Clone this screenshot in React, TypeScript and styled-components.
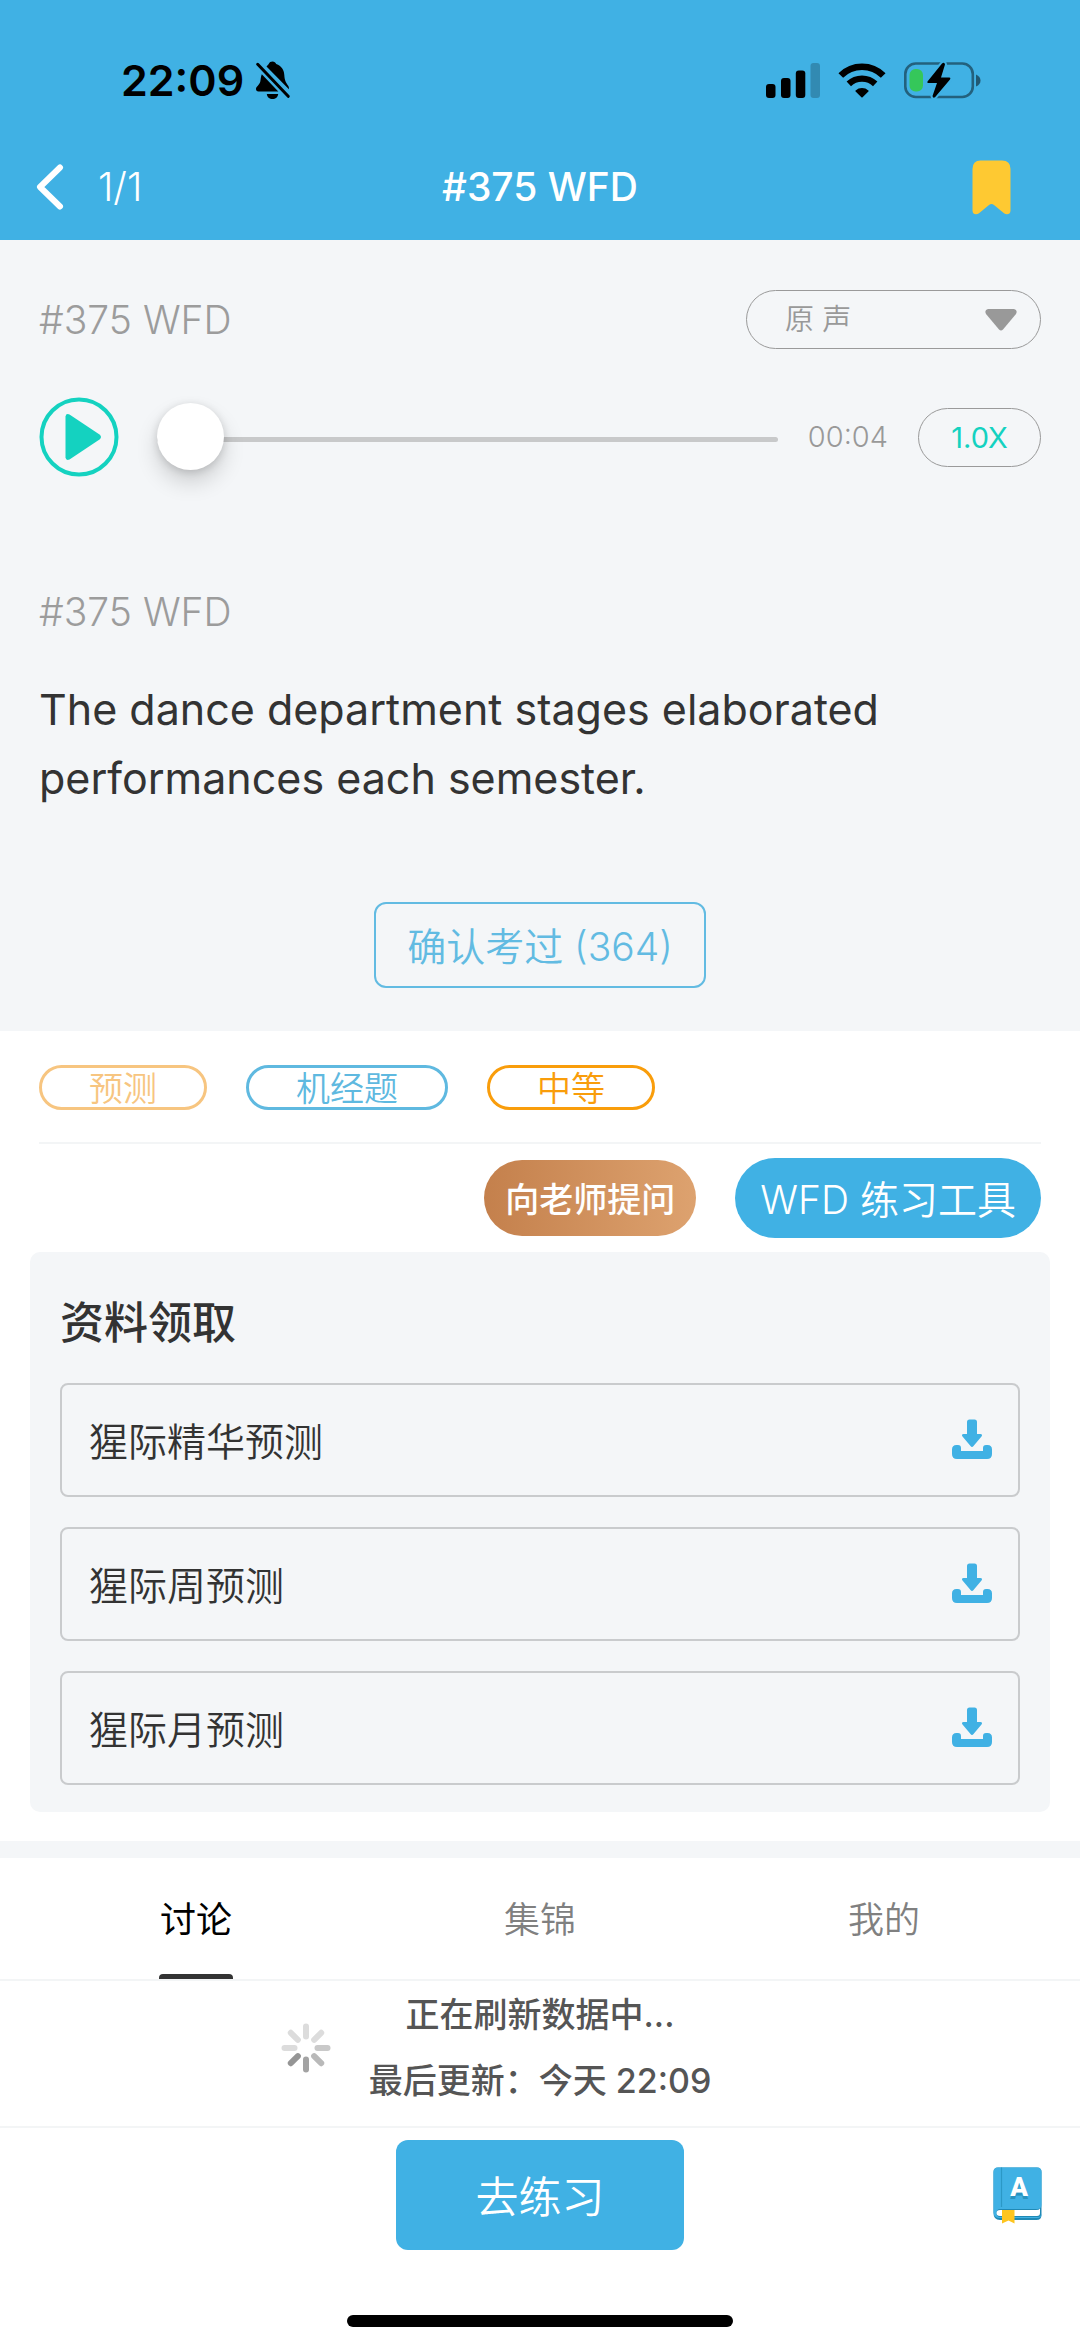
import React, { useState } from "react";
import styled, { createGlobalStyle } from "styled-components";

const BLUE = "#40b1e4";
const SOFT_BLUE = "#62bbe2";
const TEAL = "#14d2c0";
const PANEL = "#f4f6f8";
const INK = "#333333";

const GlobalStyle = createGlobalStyle`
  * { box-sizing: border-box; }
  body {
    margin: 0;
    background: #ffffff;
    color: ${INK};
    font-family: Inter, "Noto Sans CJK SC", sans-serif;
  }
  button, select { font-family: inherit; margin: 0; padding: 0; border: 0; background: none; color: inherit; }
  svg { display: block; }
  h1, h2, p, ul { margin: 0; padding: 0; }
`;

const Page = styled.div`
  display: flex;
  flex-direction: column;
  min-height: 100vh;
`;

/* ---------- header ---------- */

const Header = styled.header`
  background: ${BLUE};
`;

const StatusBar = styled.div`
  display: flex;
  align-items: center;
  justify-content: space-between;
  height: 134px;
  padding: 26px 99px 0 121px;
`;

const Cluster = styled.div<{ $gap: number }>`
  display: flex;
  align-items: center;
  gap: ${(p) => p.$gap}px;
`;

const Clock = styled.span`
  color: #000;
  font-size: 43px;
  font-weight: 600;
  line-height: 48px;
`;

const NavBar = styled.nav`
  display: grid;
  grid-template-columns: 1fr auto 1fr;
  align-items: center;
  height: 106px;
  padding: 0 69px 0 36px;
  color: #fff;
  font-size: 39px;
  line-height: 48px;
`;

const IconButton = styled.button`
  display: block;
  cursor: pointer;
`;

const Counter = styled.span`
  font-weight: 350;
`;

const NavTitle = styled.h1`
  padding-left: 33px;
  font-size: 39px;
  font-weight: 500;
`;

const NavEnd = styled.div`
  justify-self: end;
`;

/* ---------- question ---------- */

const Question = styled.section`
  display: flex;
  flex-direction: column;
  padding: 50px 39px 43px;
  background: ${PANEL};
`;

const Row = styled.div`
  display: flex;
  align-items: center;
  justify-content: space-between;
`;

const Label = styled.h2`
  color: #9c9c9c;
  font-size: 39px;
  font-weight: 300;
  line-height: 48px;
`;

const SelectBox = styled.label`
  display: grid;
  grid-template-columns: 295px;
  align-items: center;
  height: 59px;
  > * { grid-area: 1 / 1; }
  > svg { justify-self: end; margin-right: 24px; pointer-events: none; }
`;

const VoiceSelect = styled.select`
  appearance: none;
  width: 100%;
  height: 100%;
  padding: 0 38px;
  border: 1px solid #9a9a9a;
  border-radius: 30px;
  color: #999;
  font-size: 29px;
  font-weight: 350;
`;

const Player = styled.div`
  display: flex;
  align-items: center;
  height: 80px;
  margin-top: 48px;
`;

const Seek = styled.input`
  appearance: none;
  flex: 1;
  min-width: 0;
  height: 68px;
  margin: 0 30px 0 38px;
  background: transparent;
  &::-webkit-slider-runnable-track {
    height: 5px;
    border-radius: 3px;
    background: #c8c9ca;
    margin-top: 4px;
  }
  &::-webkit-slider-thumb {
    appearance: none;
    width: 67px;
    height: 67px;
    margin-top: -34px;
    border-radius: 50%;
    background: #fff;
    box-shadow: 0 12px 22px rgba(0, 0, 0, 0.16), 0 2px 8px rgba(0, 0, 0, 0.14);
  }
`;

const Duration = styled.span`
  color: #999;
  font-size: 29px;
  font-weight: 300;
  line-height: 40px;
`;

const Speed = styled.button`
  width: 123px;
  height: 59px;
  margin-left: 30px;
  border: 1px solid #9a9a9a;
  border-radius: 30px;
  color: ${TEAL};
  font-size: 29px;
`;

const Transcript = styled.div`
  margin-top: 111px;
`;

const Sentence = styled.p`
  margin-top: 39px;
  font-size: 43px;
  font-weight: 400;
  line-height: 69px;
`;

const SeenButton = styled.button`
  align-self: center;
  height: 86px;
  margin-top: 89px;
  padding: 0 31px 2px;
  border: 2px solid ${SOFT_BLUE};
  border-radius: 12px;
  color: ${SOFT_BLUE};
  font-size: 39px;
  font-weight: 350;
`;

/* ---------- tags and actions ---------- */

const Tags = styled.ul`
  display: flex;
  gap: 39px;
  margin: 0 39px;
  padding: 34px 0 32px;
  border-bottom: 2px solid #f3f5f6;
  list-style: none;
`;

const Tag = styled.li<{ $color: string }>`
  height: 45px;
  padding: 0 47px;
  border: 3px solid ${(p) => p.$color};
  border-radius: 23px;
  color: ${(p) => p.$color};
  font-size: 34px;
  font-weight: 350;
  line-height: 41px;
`;

const Actions = styled.div`
  display: flex;
  align-items: center;
  justify-content: flex-end;
  gap: 39px;
  padding: 14px 39px;
`;

const AskButton = styled.button`
  height: 76px;
  padding: 0 21px 2px;
  border-radius: 38px;
  background: linear-gradient(90deg, #c4804c, #dda26f);
  color: #fff;
  font-size: 34px;
  font-weight: 500;
`;

const ToolButton = styled.button`
  height: 80px;
  padding: 0 25px 2px;
  border-radius: 40px;
  background: ${BLUE};
  color: #fff;
  font-size: 39px;
  font-weight: 350;
`;

/* ---------- materials ---------- */

const Materials = styled.section`
  margin: 0 30px 29px;
  padding: 41px 30px 27px;
  border-radius: 10px;
  background: ${PANEL};
`;

const MaterialsTitle = styled.h2`
  font-size: 44px;
  font-weight: 500;
  line-height: 60px;
`;

const MaterialList = styled.div`
  display: flex;
  flex-direction: column;
  gap: 30px;
  margin-top: 30px;
`;

const MaterialItem = styled.button`
  display: flex;
  align-items: center;
  justify-content: space-between;
  height: 114px;
  padding: 0 26px 2px 27px;
  border: 2px solid #c9cbcd;
  border-radius: 8px;
  font-size: 39px;
  font-weight: 350;
`;

/* ---------- discussion ---------- */

const Tabs = styled.div`
  display: grid;
  grid-template-columns: repeat(3, 1fr);
  padding: 0 24px;
  border-top: 17px solid ${PANEL};
  border-bottom: 2px solid #f3f5f6;
`;

const Tab = styled.button<{ $active: boolean }>`
  justify-self: center;
  height: 121px;
  color: ${(p) => (p.$active ? "#000" : "#808080")};
  font-size: 36px;
  font-weight: ${(p) => (p.$active ? 400 : 350)};
  &::after {
    content: "";
    display: block;
    width: 74px;
    height: 5px;
    border-radius: 4px 4px 0 0;
    background: ${(p) => (p.$active ? INK : "transparent")};
  }
`;

const TabText = styled.span`
  display: block;
  height: 116px;
  line-height: 125px;
`;

const Refresh = styled.div`
  display: grid;
  grid-template-columns: 1fr auto 1fr;
  column-gap: 38px;
  padding: 1px 0 12px;
  > svg { justify-self: end; align-self: center; }
`;

const RefreshText = styled.p`
  color: #555;
  font-size: 34px;
  font-weight: 500;
  line-height: 66px;
  text-align: center;
`;

/* ---------- bottom bar ---------- */

const BottomBar = styled.footer`
  display: grid;
  grid-template-columns: 1fr auto 1fr;
  align-items: center;
  padding: 12px 38px 0;
  border-top: 2px solid #f3f5f6;
`;

const PracticeButton = styled.button`
  grid-column: 2;
  width: 288px;
  height: 110px;
  padding-bottom: 2px;
  border-radius: 12px;
  background: ${BLUE};
  color: #fff;
  font-size: 43px;
  font-weight: 350;
`;

const DictionaryButton = styled(IconButton)`
  justify-self: end;
`;

const HomeIndicator = styled.div`
  align-self: center;
  width: 386px;
  height: 12px;
  margin: auto 0 20px;
  border-radius: 6px;
  background: #000;
`;

/* ---------- drawings ---------- */

const MutedBell = () => (
  <svg width="34" height="38" viewBox="0 0 34 38" fill="#000">
    <path d="M10.500 5.500C11.500 4.300 12.300 3.900 12.700 3.100C13.300 1.200 14.800 0.500 16.500 0.500C18.300 0.500 19.600 1.400 20.200 3.100C25.500 5 28 9 28.300 14C28.600 19 29.500 21 32 24.500C33 26 33 27 32.900 28.300Z" />
    <path d="M5.800 13.200L22.300 30.500H2.500C0.800 30.500 0 29.500 0 28C0 25.500 3.500 24 4.300 20.500C4.800 18 4.800 15.500 5.800 13.200Z" />
    <path d="M10.800 33H22.200C22 36 19.500 38 16.500 38C13.500 38 11 36 10.800 33Z" />
    <path d="M1.700 3.300L32.200 35.300" stroke="#000" strokeWidth="3" strokeLinecap="round" />
  </svg>
);

const Signal = () => (
  <svg width="54" height="35" viewBox="0 0 54 35">
    <rect x="0" y="21" width="9.500" height="14" rx="3" />
    <rect x="15" y="15" width="9.500" height="20" rx="3" />
    <rect x="29.800" y="7.500" width="9.500" height="27.500" rx="3" />
    <rect x="44.500" y="0" width="9.500" height="35" rx="3" opacity="0.22" />
  </svg>
);

const Wifi = () => (
  <svg width="48" height="35" viewBox="0 0 48 35">
    <path d="M2.800 12.500A30 30 0 0 1 45.200 12.500" fill="none" stroke="#000" strokeWidth="6.600" />
    <path d="M10.800 20.800A19.300 19.300 0 0 1 37.200 20.800" fill="none" stroke="#000" strokeWidth="6.400" />
    <path d="M17.600 27.400A9.600 9.600 0 0 1 30.400 27.400Q31 28 30.400 28.600L24.600 34.300Q24 34.900 23.400 34.300L17.600 28.600Q17 28 17.600 27.400Z" />
  </svg>
);

const Battery = () => (
  <svg width="77" height="37" viewBox="0 0 77 37">
    <rect x="1.300" y="1.500" width="67.500" height="33.500" rx="10.500" fill="none" stroke="#000" strokeOpacity="0.45" strokeWidth="2.600" />
    <path d="M72 12.500Q76.500 14.500 76.500 18.500T72 24.500Z" fillOpacity="0.5" />
    <rect x="5.500" y="7" width="13.500" height="22.500" rx="6" fill="#35c75a" />
    <path
      d="M38 1.500L23.500 19.500Q23 21 24.500 21H33L28.500 34Q29 36.500 31 35.200L46 17.500Q47 15.500 45.200 15.500H37L41 2.500Q40.500 -0.500 38 1.500Z"
      stroke={BLUE}
      strokeWidth="4"
      paintOrder="stroke"
    />
  </svg>
);

const BackArrow = () => (
  <svg width="28" height="46" viewBox="0 0 28 46" fill="none" stroke="#fff" strokeWidth="6" strokeLinecap="round" strokeLinejoin="round">
    <path d="M24 3.500L4 23L24 42.500" />
  </svg>
);

const Bookmark = () => (
  <svg width="39" height="55" viewBox="0 0 39 55">
    <path
      d="M8.500 0.500H30Q38.500 0.500 38.500 9V50.500C38.500 54.500 34.500 55.300 32 53.200L22 45Q19.500 43 17 45L7 53.200C4.500 55.300 0.500 54.500 0.500 50.500V9Q0.500 0.500 8.500 0.500Z"
      fill="#fec932"
    />
  </svg>
);

const Caret = () => (
  <svg width="32" height="22" viewBox="0 0 32 22">
    <path d="M3 0H29Q33 1 31 5L18 20.500Q16 22.500 14 20.500L1 5Q-1 1 3 0Z" fill="#999" />
  </svg>
);

const Play = () => (
  <svg width="80" height="80" viewBox="0 0 80 80">
    <circle cx="40" cy="40" r="37.500" fill="none" stroke={TEAL} strokeWidth="4" />
    <path d="M26.500 19.500Q27 16 30.500 17.500L60.500 37.500Q63.500 40 60.500 42.500L30.500 62.500Q27 64 26.500 60.500Z" fill={TEAL} />
  </svg>
);

const Download = () => (
  <svg width="40" height="40" viewBox="0 0 40 40" fill={BLUE}>
    <path d="M17.500 0.500H22.500Q25 0.500 25 3V15H28.500Q31 15.500 29.500 17.500L21.500 27Q20 28.800 18.500 27L10.500 17.500Q9 15.500 11.500 15H15V3Q15 0.500 17.500 0.500Z" />
    <path d="M4.500 26H6Q9 26 9 29V32H31V29Q31 26 34 26H35.500Q40 26 40 30.500V35Q40 40 35 40H5Q0 40 0 35V30.500Q0 26 4.500 26Z" />
  </svg>
);

const SPOKES = ["#dcdcdc", "#dcdcdc", "#c9c9c9", "#b9b9b9", "#a3a3a3", "#959595", "#dcdcdc", "#dcdcdc"];

const Spinner = () => (
  <svg width="50" height="50" viewBox="0 0 50 50" strokeWidth="6" strokeLinecap="round">
    {SPOKES.map((color, i) => (
      <path key={i} d="M25 3.500V13.500" stroke={color} transform={`rotate(${i * 45} 25 25)`} />
    ))}
  </svg>
);

const Dictionary = () => (
  <svg width="49" height="57" viewBox="0 0 49 57">
    <path d="M5 0.500H44Q48.500 0.500 48.500 5V48Q48.500 53 43.500 53H7Q0.500 53 0.500 46V5Q0.500 0.500 5 0.500Z" fill="#2089b5" />
    <path d="M5 0.500H44Q48.500 0.500 48.500 5V38Q48.500 42 44 42H7Q3.500 42 3.500 46T7 50H45Q47.500 50 48.500 47Q48.500 51 44 51H7Q0.500 51 0.500 45V5Q0.500 0.500 5 0.500Z" fill={BLUE} />
    <path d="M8.500 0.500V40" stroke="#2b98c6" strokeWidth="1.200" />
    <path d="M7 43H43Q46 43 47 41.500V46Q47 49 44 49H7Q3.500 49 3.500 46T7 43Z" fill="#fff" />
    <path d="M9 43H21.500V56.500L15.500 53.500L9 56.500Z" fill="#fec51f" />
    <text x="26" y="32" textAnchor="middle" fontFamily="Roboto, sans-serif" fontSize="26" fontWeight="900" fill="#2793c0">A</text>
    <text x="26" y="29" textAnchor="middle" fontFamily="Roboto, sans-serif" fontSize="26" fontWeight="900" fill="#fff">A</text>
  </svg>
);

/* ---------- data ---------- */

const TAGS = [
  { text: "预测", color: "#f7c580" },
  { text: "机经题", color: "#5fb9e0" },
  { text: "中等", color: "#f99d0b" },
];
const MATERIALS = ["猩际精华预测", "猩际周预测", "猩际月预测"];
const TABS = ["讨论", "集锦", "我的"];

export default function App() {
  const [tab, setTab] = useState(0);
  const [position, setPosition] = useState(0);

  return (
    <Page>
      <GlobalStyle />
      <Header>
        <StatusBar>
          <Cluster $gap={12}>
            <Clock>22:09</Clock>
            <MutedBell />
          </Cluster>
          <Cluster $gap={18}>
            <Signal />
            <Wifi />
            <Battery />
          </Cluster>
        </StatusBar>
        <NavBar>
          <Cluster $gap={34}>
            <IconButton aria-label="返回">
              <BackArrow />
            </IconButton>
            <Counter>1/1</Counter>
          </Cluster>
          <NavTitle>#375 WFD</NavTitle>
          <NavEnd>
            <IconButton aria-label="收藏">
              <Bookmark />
            </IconButton>
          </NavEnd>
        </NavBar>
      </Header>

      <Question>
        <Row>
          <Label>#375 WFD</Label>
          <SelectBox>
            <VoiceSelect aria-label="声音">
              <option>原 声</option>
            </VoiceSelect>
            <Caret />
          </SelectBox>
        </Row>
        <Player>
          <IconButton aria-label="播放">
            <Play />
          </IconButton>
          <Seek
            type="range"
            min={0}
            max={4}
            value={position}
            onChange={(e) => setPosition(Number(e.target.value))}
            aria-label="播放进度"
          />
          <Duration>00:04</Duration>
          <Speed>1.0X</Speed>
        </Player>
        <Transcript>
          <Label>#375 WFD</Label>
          <Sentence>The dance department stages elaborated performances each semester.</Sentence>
        </Transcript>
        <SeenButton>确认考过 (364)</SeenButton>
      </Question>

      <Tags>
        {TAGS.map((t) => (
          <Tag key={t.text} $color={t.color}>
            {t.text}
          </Tag>
        ))}
      </Tags>
      <Actions>
        <AskButton>向老师提问</AskButton>
        <ToolButton>WFD 练习工具</ToolButton>
      </Actions>

      <Materials>
        <MaterialsTitle>资料领取</MaterialsTitle>
        <MaterialList>
          {MATERIALS.map((name) => (
            <MaterialItem key={name}>
              {name}
              <Download />
            </MaterialItem>
          ))}
        </MaterialList>
      </Materials>

      <Tabs role="tablist">
        {TABS.map((name, i) => (
          <Tab key={name} role="tab" aria-selected={i === tab} $active={i === tab} onClick={() => setTab(i)}>
            <TabText>{name}</TabText>
          </Tab>
        ))}
      </Tabs>
      <Refresh>
        <Spinner />
        <div>
          <RefreshText>正在刷新数据中...</RefreshText>
          <RefreshText>最后更新：今天 22:09</RefreshText>
        </div>
      </Refresh>

      <BottomBar>
        <PracticeButton>去练习</PracticeButton>
        <DictionaryButton aria-label="词典">
          <Dictionary />
        </DictionaryButton>
      </BottomBar>
      <HomeIndicator />
    </Page>
  );
}
